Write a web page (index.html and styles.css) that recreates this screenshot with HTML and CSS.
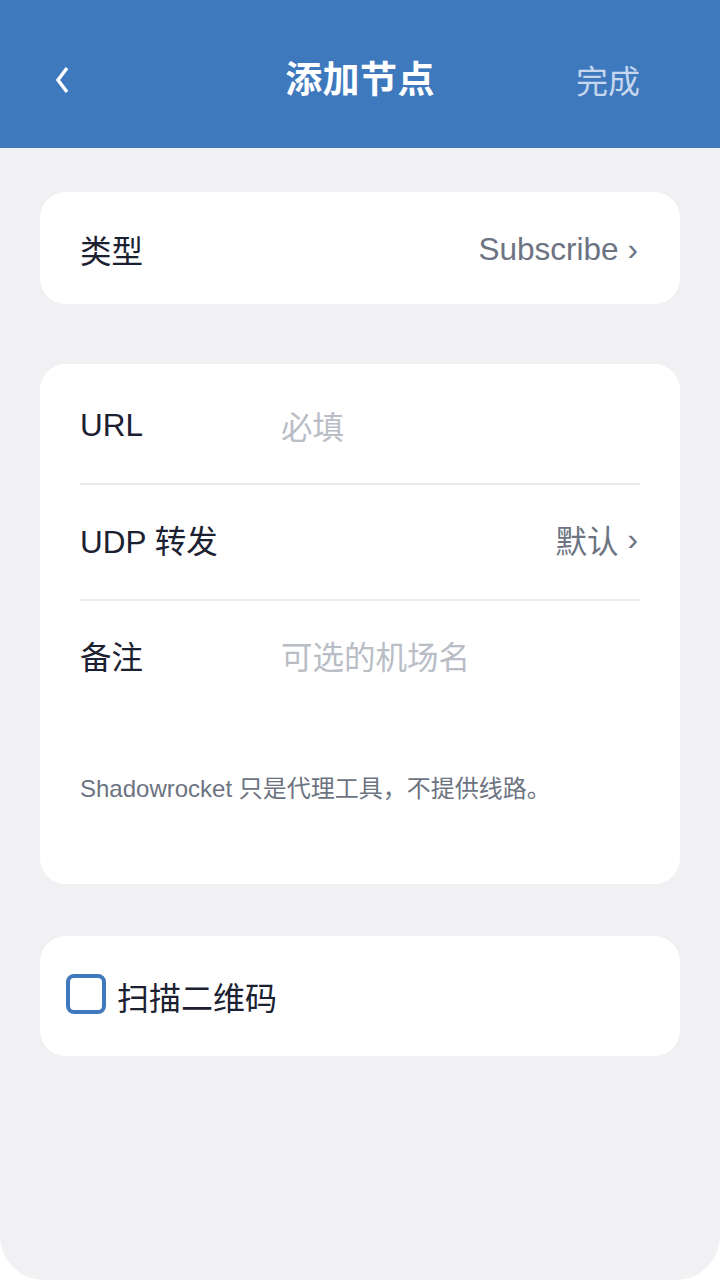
FILE: index.html
```html
<!DOCTYPE html>
<html lang="zh-CN">
<head>
<meta charset="utf-8">
<title>添加节点</title>
<link rel="stylesheet" href="styles.css">
</head>
<body>
<div class="app">
  <header class="navbar">
    <div class="nav-left">
      <svg class="back" width="20" height="30" viewBox="0 0 20 30" aria-hidden="true">
        <polyline points="13,3 4,15 13,27" fill="none" stroke="#ffffff" stroke-width="3.4" stroke-linecap="butt" stroke-linejoin="miter"/>
      </svg>
    </div>
    <h1 class="title">添加节点</h1>
    <div class="nav-right">完成</div>
  </header>

  <main class="content">
    <section class="card card-type">
      <div class="row">
        <span class="label">类型</span>
        <span class="value">Subscribe <span class="chev">›</span></span>
      </div>
    </section>

    <section class="card card-form">
      <div class="row row-field first">
        <span class="label col">URL</span>
        <span class="placeholder">必填</span>
      </div>
      <div class="row row-field">
        <span class="label">UDP 转发</span>
        <span class="value">默认 <span class="chev">›</span></span>
      </div>
      <div class="row row-field last">
        <span class="label col">备注</span>
        <span class="placeholder">可选的机场名</span>
      </div>
      <p class="note">Shadowrocket 只是代理工具，不提供线路。</p>
    </section>

    <section class="card card-scan">
      <span class="checkbox"></span>
      <span class="scan-label">扫描二维码</span>
    </section>
  </main>
</div>
</body>
</html>
```

FILE: styles.css
```css
* {
  box-sizing: border-box;
}

html, body {
  margin: 0;
  padding: 0;
  background: #ffffff;
}

body {
  font-family: "Liberation Sans", Arial, "Noto Sans CJK SC", sans-serif;
  color: #1b2130;
}

.app {
  width: 720px;
  height: 1280px;
  background: #f1f1f4;
  border-bottom-left-radius: 44px;
  border-bottom-right-radius: 44px;
  overflow: hidden;
}

.navbar {
  height: 148px;
  background: #3f79bd;
  display: grid;
  grid-template-columns: 1fr auto 1fr;
  align-items: center;
  padding: 0 54px;
}

.nav-left {
  display: flex;
  align-items: center;
  padding-top: 12px;
}

.back {
  display: block;
}

.title {
  margin: 0;
  font-size: 37px;
  font-weight: 700;
  color: #ffffff;
  letter-spacing: 0.4px;
  padding-top: 5px;
}

.nav-right {
  justify-self: end;
  font-size: 32px;
  color: #c6d7ee;
  padding-top: 10px;
  padding-right: 26px;
}

.content {
  padding: 44px 40px 0;
  display: flex;
  flex-direction: column;
}

.card {
  background: #ffffff;
  border-radius: 26px;
}

.card-type {
  height: 112px;
  display: flex;
  align-items: center;
  padding: 0 42px 4px 40px;
}

.row {
  display: flex;
  align-items: center;
  width: 100%;
}

.label {
  font-size: 31.5px;
  color: #1b2130;
}

.label.col {
  width: 201px;
  flex: none;
}

.value {
  margin-left: auto;
  font-size: 31.5px;
  color: #6c7381;
  display: flex;
  align-items: center;
  padding-top: 6px;
}

.card-type .label {
  padding-top: 6px;
}

.chev {
  margin-left: 9px;
  font-size: 31.5px;
}

.placeholder {
  font-size: 31.5px;
  color: #b9bdc6;
}

.card-form {
  margin-top: 60px;
  height: 520px;
  padding: 5px 40px 0;
}

.row-field {
  height: 116px;
  padding-bottom: 6px;
  border-bottom: 2px solid #ececee;
}

.row-field.first {
  padding-bottom: 2px;
}

.row-field.last {
  border-bottom: none;
  padding-bottom: 8px;
}

.row-field .value {
  margin-right: 2px;
  padding-top: 0;
}

.note {
  margin: 58px 0 0;
  font-size: 24px;
  line-height: 28px;
  color: #6c7381;
}

.card-scan {
  margin-top: 52px;
  height: 120px;
  display: flex;
  align-items: center;
  padding: 0 26px;
}

.checkbox {
  width: 40px;
  height: 40px;
  border: 4px solid #3f79bd;
  border-radius: 8px;
  flex: none;
  margin-top: -4px;
}

.scan-label {
  margin-left: 11px;
  font-size: 32px;
  color: #1b2130;
}
```
